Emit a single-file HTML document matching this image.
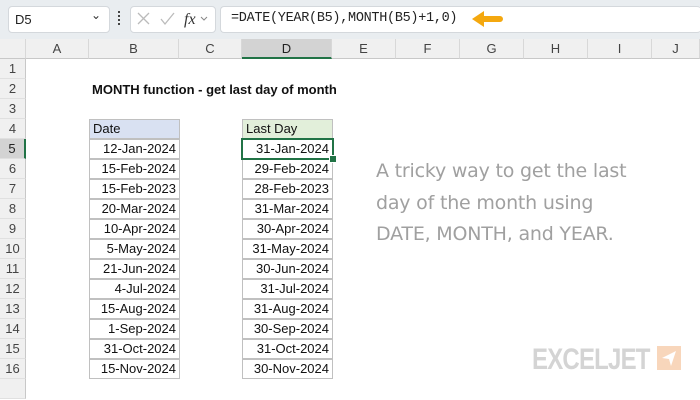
<!DOCTYPE html>
<html><head><style>
body{margin:0;width:700px;height:400px;overflow:hidden;background:#fff;font-family:"Liberation Sans",Arial,sans-serif;position:relative}
.a{position:absolute}
.fb{left:0;top:0;width:700px;height:39px;background:#e9edf0}
.box{background:#fff;border:1px solid #d4d8dc;border-radius:4px}
.ch{top:39px;height:20px;background:#f0f0f0;border-bottom:1px solid #c8c8c8;font-size:13px;color:#444;text-align:center;line-height:20px;border-right:1px solid #d8d8d8;box-sizing:border-box}
.rh{left:0;width:26px;height:20px;background:#f0f0f0;border-right:1px solid #c8c8c8;font-size:13px;color:#444;text-align:center;line-height:20px;box-sizing:border-box;border-bottom:1px solid #e0e0e0}
.c{height:20px;box-sizing:border-box;border:1px solid #c0c0c0;font-size:13px;line-height:18px;color:#111;text-align:right;padding-right:3px}
</style></head><body>
<div class="a fb"></div>
<div class="a box" style="left:8px;top:6px;width:100px;height:25px"></div>
<div class="a" style="left:15px;top:12px;font-size:13px;color:#222">D5</div>
<div class="a" style="left:91px;top:8px;font-size:12px;color:#333">&#8964;</div>
<div class="a" style="left:118px;top:11px;width:2px;height:14px;border-left:2px dotted #444"></div>
<div class="a box" style="left:130px;top:6px;width:84px;height:25px"></div>
<svg class="a" style="left:130px;top:6px" width="86" height="26"><path d="M8 7l11 11M19 7L8 18" stroke="#bbb" stroke-width="1.3" fill="none"/><path d="M31 13l4 5 9-11" stroke="#bbb" stroke-width="1.3" fill="none"/><text x="54" y="18" font-family="Liberation Serif" font-style="italic" font-size="16" fill="#333">fx</text><path d="M71 11l3 3 3-3" stroke="#888" fill="none"/></svg>
<div class="a box" style="left:220px;top:6px;width:480px;height:25px;border-right:none"></div>
<div class="a" style="left:231px;top:11px;font-family:'Liberation Mono',monospace;font-size:13.5px;color:#222;letter-spacing:-0.3px">=DATE(YEAR(B5),MONTH(B5)+1,0)</div>
<svg class="a" style="left:470px;top:10px" width="36" height="18"><path d="M2 9L14 1v5h16a3 3 0 010 6H14v5z" fill="#f4a80f"/></svg>
<div class="a ch" style="left:0;width:26px"></div>
<div class="a ch" style="left:26px;width:63px">A</div>
<div class="a ch" style="left:89px;width:90px">B</div>
<div class="a ch" style="left:179px;width:63px">C</div>
<div class="a ch" style="left:242px;width:90px;background:#d3d3d3;border-bottom:2px solid #217346;color:#222">D</div>
<div class="a ch" style="left:332px;width:64px">E</div>
<div class="a ch" style="left:396px;width:64px">F</div>
<div class="a ch" style="left:460px;width:64px">G</div>
<div class="a ch" style="left:524px;width:64px">H</div>
<div class="a ch" style="left:588px;width:64px">I</div>
<div class="a ch" style="left:652px;width:48px">J</div>
<div id="rows"></div>
<div class="a" style="left:92px;top:82px;font-size:13px;font-weight:bold;color:#111">MONTH function - get last day of month</div>
<div class="a" style="left:376px;top:156px;font-size:19px;line-height:31.5px;color:#a0a0a0;font-family:'DejaVu Sans',sans-serif;letter-spacing:-0.2px">A tricky way to get the last<br>day of the month using<br>DATE, MONTH, and YEAR.</div>
<div class="a" style="left:532px;top:343px;font-size:30px;font-weight:bold;color:#d4d4d4;letter-spacing:-1px;transform:scaleX(0.8);transform-origin:0 0;font-family:'Liberation Sans',sans-serif">EXCELJET</div>
<svg class="a" style="left:657px;top:346px" width="24" height="24"><rect width="24" height="24" fill="#f8d6bb"/><path d="M5 12L19 5 14 20 12 13z" fill="#fff"/></svg>
<script>
var B=["12-Jan-2024","15-Feb-2024","15-Feb-2023","20-Mar-2024","10-Apr-2024","5-May-2024","21-Jun-2024","4-Jul-2024","15-Aug-2024","1-Sep-2024","31-Oct-2024","15-Nov-2024"];
var D=["31-Jan-2024","29-Feb-2024","28-Feb-2023","31-Mar-2024","30-Apr-2024","31-May-2024","30-Jun-2024","31-Jul-2024","31-Aug-2024","30-Sep-2024","31-Oct-2024","30-Nov-2024"];
var h="";
for(var i=1;i<=17;i++){var t=59+(i-1)*20;h+='<div class="a rh" style="top:'+t+'px;'+(i==5?'background:#d3d3d3;border-right:2px solid #217346;color:#222':'')+'">'+(i<17?i:'')+'</div>';}
h+='<div class="a c" style="left:89px;top:119px;width:91px;text-align:left;padding-left:3px;background:#d9e1f2">Date</div>';
h+='<div class="a c" style="left:242px;top:119px;width:91px;text-align:left;padding-left:3px;background:#e2efda">Last Day</div>';
for(var j=0;j<12;j++){var t=139+j*20;h+='<div class="a c" style="left:89px;top:'+t+'px;width:91px">'+B[j]+'</div><div class="a c" style="left:242px;top:'+t+'px;width:91px">'+D[j]+'</div>';}
h+='<div class="a" style="left:241px;top:138px;width:93px;height:22px;border:2px solid #217346;box-sizing:border-box"></div><div class="a" style="left:329px;top:155px;width:6px;height:6px;background:#217346;border:1px solid #fff"></div>';
document.getElementById("rows").innerHTML=h;
</script>
</body></html>
